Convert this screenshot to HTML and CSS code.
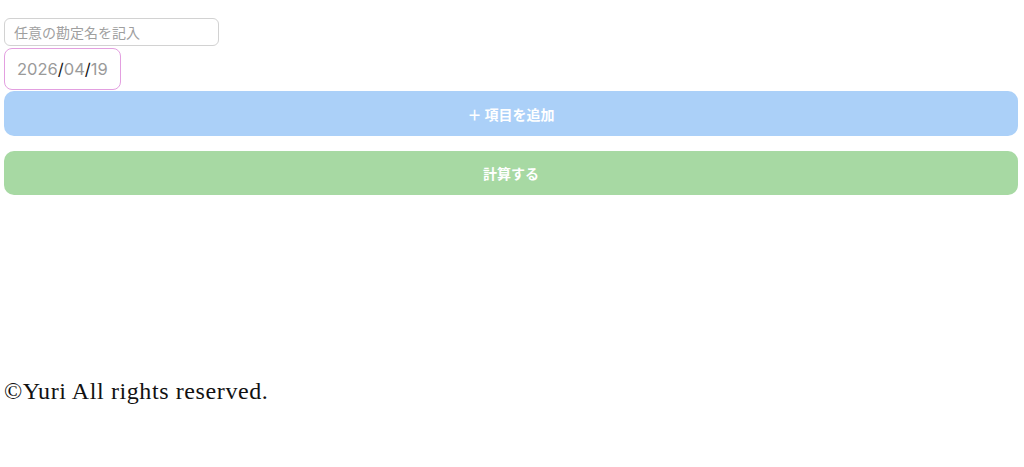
FILE: index.html
```html
<!DOCTYPE html>
<html lang="ja">
<head>
<meta charset="utf-8">
<link rel="stylesheet" href="styles.css">
</head>
<body>
<main class="app">
  <div class="form">
    <input class="name-input" type="text" placeholder="任意の勘定名を記入">
    <div class="date-input"><span class="dim">2026</span><span class="sep">/</span><span class="dim">04</span><span class="sep">/</span><span class="dim">19</span></div>
    <button class="btn btn-add" type="button">＋ 項目を追加</button>
    <button class="btn btn-calc" type="button">計算する</button>
  </div>
  <footer class="footer">©Yuri All rights reserved.</footer>
</main>
</body>
</html>
```
FILE: styles.css
```css
html, body {
  margin: 0;
  padding: 0;
  background: #fff;
}
.app {
  padding: 18px 6px 0 4px;
}
.form {
  display: flex;
  flex-direction: column;
  align-items: flex-start;
}
.name-input {
  box-sizing: border-box;
  width: 215px;
  height: 28px;
  margin: 0;
  padding: 0 9px;
  border: 1px solid #d2d2d2;
  border-radius: 6px;
  font-family: "Noto Sans CJK JP", sans-serif;
  font-size: 14px;
  color: #333;
  outline: none;
}
.name-input::placeholder {
  color: #9f9f9f;
}
.date-input {
  box-sizing: border-box;
  margin-top: 2px;
  width: 117px;
  height: 42px;
  padding: 0 0 0 12px;
  border: 1.5px solid #e39fe0;
  border-radius: 8px;
  display: flex;
  align-items: center;
  font-family: Inter, "Noto Sans", sans-serif;
  font-size: 16.5px;
  color: #111;
}
.dim {
  color: #9a9a9a;
}
.sep {
  color: #111;
}
.btn {
  box-sizing: border-box;
  width: 100%;
  height: 45px;
  border: none;
  border-radius: 10px;
  color: #fff;
  font-family: "Noto Sans CJK JP", sans-serif;
  font-weight: 700;
  font-size: 14px;
  padding: 0;
}
.btn-add {
  margin-top: 1px;
  background: #abd0f8;
}
.btn-calc {
  margin-top: 15px;
  height: 44px;
  background: #a7d9a3;
}
.footer {
  margin-top: 183px;
  font-family: "Liberation Serif", "Times New Roman", serif;
  font-size: 24px;
  letter-spacing: 0.6px;
  color: #111;
}
```
